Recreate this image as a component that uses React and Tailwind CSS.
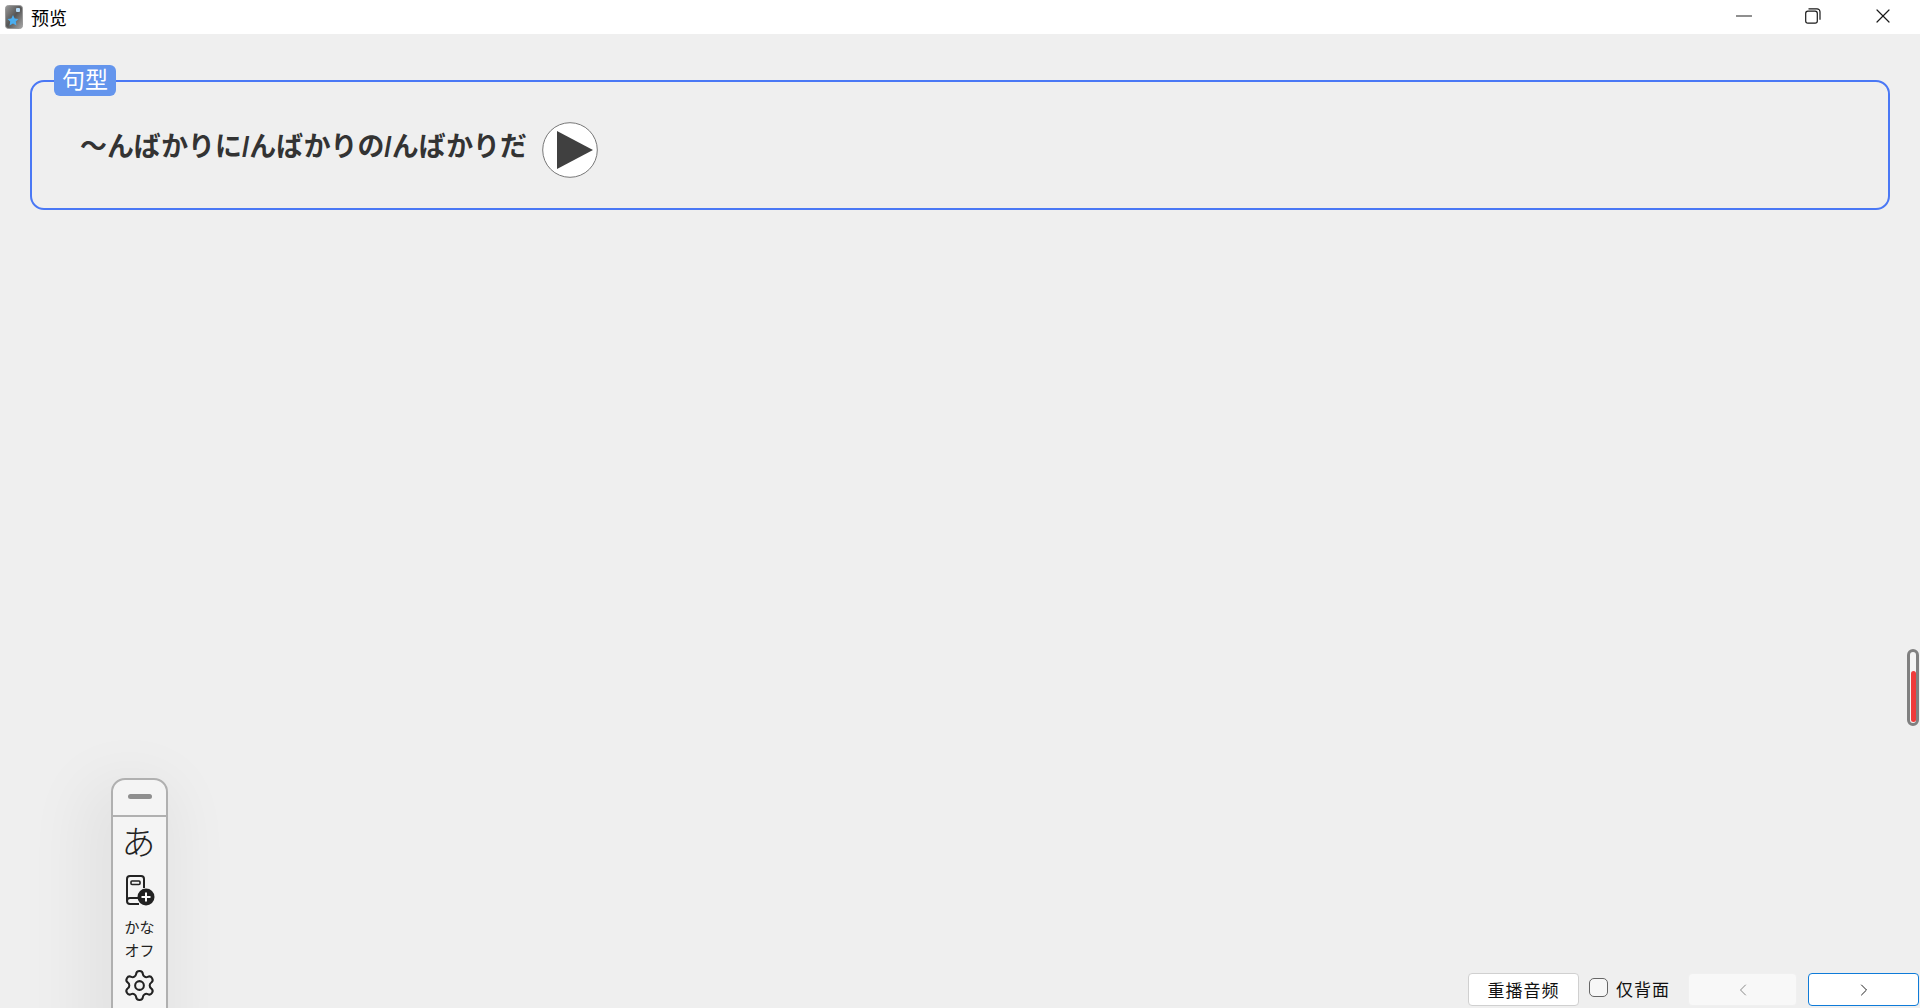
import { X, Minus, Settings, ChevronLeft, ChevronRight } from "lucide-react";

const cjk = "font-['Noto_Sans_CJK_SC','Noto_Sans_CJK_JP',sans-serif]";

const AppIcon = () => (
  <svg width="18" height="24" viewBox="0 0 18 24" className="ml-[5px]">
    <defs>
      <linearGradient id="appBg" x1="0" y1="0" x2="1" y2="1">
        <stop offset="0" stopColor="#9a9a9a" />
        <stop offset="0.5" stopColor="#555" />
        <stop offset="1" stopColor="#aaa" />
      </linearGradient>
    </defs>
    <rect x="0.5" y="0.5" width="17" height="23" rx="3" fill="url(#appBg)" stroke="#999" />
    <path
      d="M8 10l1.7 3.4 3.8.5-2.7 2.7.6 3.8L8 18.6l-3.4 1.8.6-3.8L2.500 13.900l3.800-.5z"
      fill="#4aaef0"
    />
    <rect x="11" y="3" width="4" height="4" rx="1" fill="#b5d9f5" />
  </svg>
);

const RestoreIcon = () => (
  <svg width="16" height="16" viewBox="0 0 16 16" fill="none" stroke="#1a1a1a" strokeWidth="1.2">
    <rect x="0.7" y="3.2" width="11.600" height="12" rx="2.200" />
    <path d="M3.500 0.800h8.500a3 3 0 0 1 3 3v8" />
  </svg>
);

const PlayButton = () => (
  <svg width="56" height="56" viewBox="0 0 56 56">
    <circle cx="28" cy="28" r="27.300" fill="#fff" stroke="#777" strokeWidth="1" />
    <path d="M15 9l36 19-36 19z" fill="#404040" />
  </svg>
);

const CardIcon = () => (
  <svg width="30" height="31" viewBox="0 0 30 31" fill="none" stroke="#222" strokeWidth="2">
    <path d="M14 29H5a3 3 0 0 1-3-3V4a3 3 0 0 1 3-3h11a3 3 0 0 1 3 3v9" />
    <path d="M2 26a3 3 0 0 1 3-3h8" />
    <rect x="6" y="6" width="9" height="3.500" rx="1" strokeWidth="1.600" />
    <circle cx="21" cy="22" r="8.500" fill="#222" stroke="none" />
    <path d="M21 17.500v9M16.500 22h9" stroke="#fff" strokeWidth="2" />
  </svg>
);

export default function App() {
  return (
    <div className={`relative h-[1008px] w-[1920px] overflow-hidden bg-[#efefef] flex flex-col ${cjk}`}>
      {/* title bar */}
      <div className="h-[34px] bg-white flex items-center shrink-0">
        <AppIcon />
        <span className="ml-[8px] text-[18px] text-black leading-none">预览</span>
        <div className="ml-auto flex items-center">
          <Minus size={26} strokeWidth={0.9} className="text-[#1a1a1a] mr-[48px] -mt-[2px]" />
          <div className="mr-[50px] -mt-[2px]">
            <RestoreIcon />
          </div>
          <X size={24} strokeWidth={1.2} className="text-[#1a1a1a] mr-[25px] -mt-[2px]" />
        </div>
      </div>

      {/* sentence card */}
      <div className="flex-1">
        <div className="relative mt-[46px] ml-[30px] w-[1860px] h-[130px] border-2 border-[#4a78f5] rounded-[14px] pl-[48px] pt-[40px]">
          <div className="absolute -top-[17px] left-[22px] w-[62px] h-[31px] rounded-[6px] bg-[#6495ed] text-white text-[23px] leading-[26px] text-center">
            句型
          </div>
          <div className="flex items-start">
            <span className="text-[26.900px] font-bold text-[#333] leading-[36px] mt-[7px] font-['Liberation_Sans','Noto_Sans_CJK_JP',sans-serif]">
              ～んばかりに/んばかりの/んばかりだ
            </span>
            <div className="ml-[15px]">
              <PlayButton />
            </div>
          </div>
        </div>
      </div>

      {/* bottom actions */}
      <div className="h-[35px] pb-[2px] pr-[1px] flex justify-end items-center shrink-0">
        <button className="w-[111px] h-[33px] bg-white border border-[#d0d0d0] rounded-[4px] text-[17px] tracking-[1px] text-[#111]">
          重播音频
        </button>
        <label className="flex items-center ml-[10px] w-[99px]">
          <span className="w-[19px] h-[19px] border border-[#666] rounded-[5px] bg-[#f7f7f7] shrink-0 -mt-[4px]" />
          <span className="ml-[8px] text-[17px] tracking-[1px] text-[#111] -mt-[2px]">仅背面</span>
        </label>
        <button className="w-[109px] h-[33px] bg-[#f8f8f8] border border-[#f0f0f0] rounded-[4px] flex items-center justify-center">
          <ChevronLeft size={20} strokeWidth={1.2} className="text-[#888]" />
        </button>
        <button className="ml-[11px] w-[111px] h-[33px] bg-white border-[1.500px] border-[#0f7bd8] rounded-[4px] flex items-center justify-center">
          <ChevronRight size={20} strokeWidth={1.2} className="text-[#222]" />
        </button>
      </div>

      {/* floating toolbar */}
      <div className="absolute left-[111px] top-[778px] w-[57px] h-[260px] bg-[#f4f4f4] border-2 border-[#b0b0b0] rounded-[14px] shadow-[-10px_20px_60px_20px_rgba(0,0,0,0.05)] flex flex-col items-center">
        <div className="w-full h-[37px] border-b-2 border-[#b0b0b0] flex items-center justify-center shrink-0">
          <div className="w-[24px] h-[5px] rounded-full bg-[#8e8e8e] -mt-[2px]" />
        </div>
        <div className="text-[34px] leading-[44px] text-[#222] mt-[2px] -ml-[2px] font-['Noto_Sans_CJK_JP',sans-serif] font-light">あ</div>
        <div className="mt-[12px]">
          <CardIcon />
        </div>
        <div className="mt-[9px] text-[15px] leading-[23px] text-center text-[#222] font-['Noto_Sans_CJK_JP',sans-serif]">
          かな
          <br />
          オフ
        </div>
        <Settings size={35} strokeWidth={1.4} className="text-[#222] mt-[7px]" />
      </div>

      {/* progress slider */}
      <div className="absolute left-[1907px] top-[649px] w-[12px] h-[77px] border-[3px] border-[#808080] rounded-full bg-[#f4f4f4] flex items-end justify-center pb-[1px]">
        <div className="w-[5px] h-[51px] rounded-full bg-[#f03a3a]" />
      </div>
    </div>
  );
}
